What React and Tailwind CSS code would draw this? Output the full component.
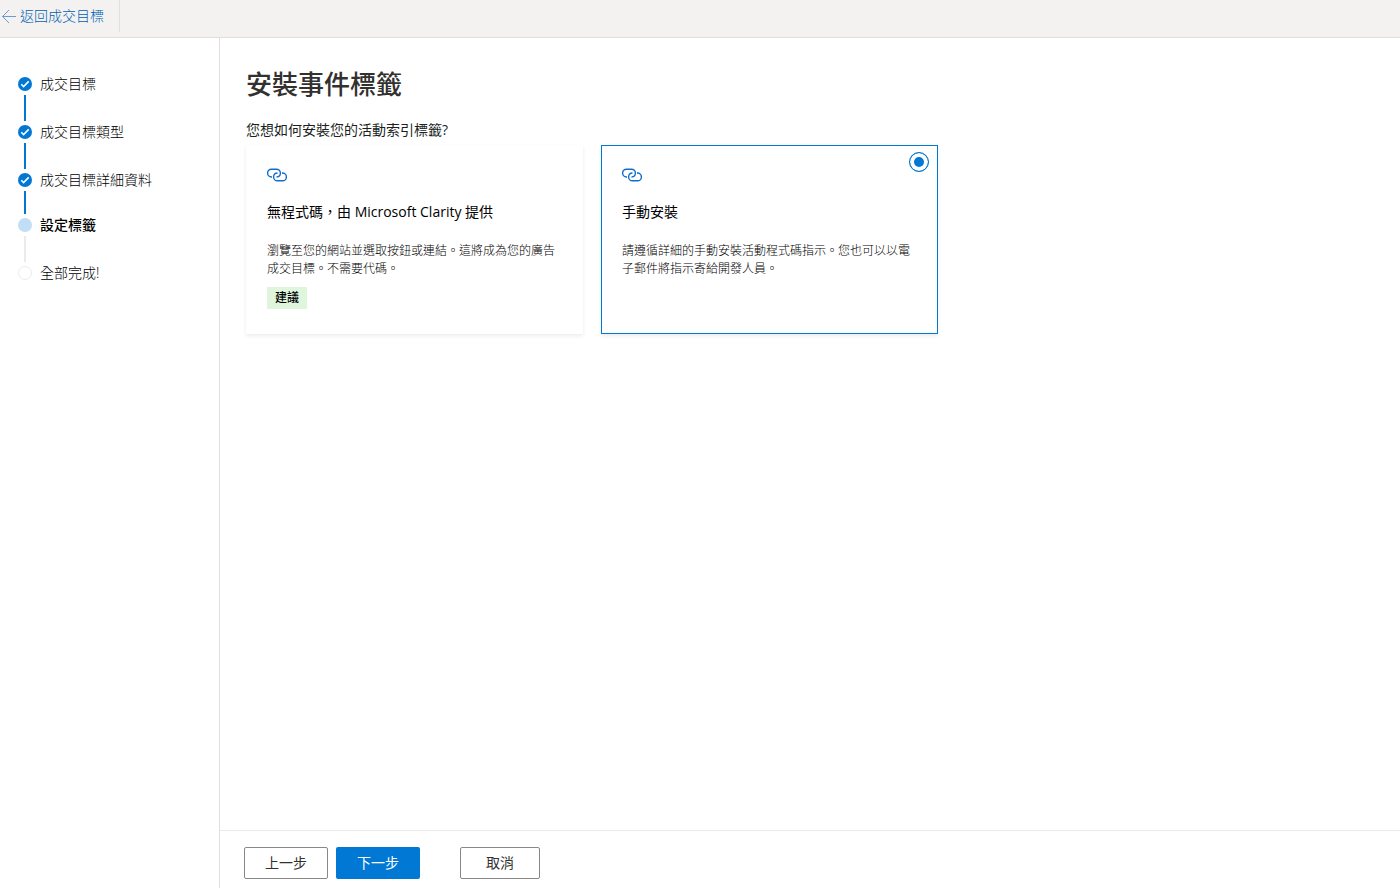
import React, { useState } from 'react';
import clsx from 'clsx';

// ─── Data ────────────────────────────────────────────────────────────────────
const STEPS = [
  { label: '成交目標', status: 'done' },
  { label: '成交目標類型', status: 'done' },
  { label: '成交目標詳細資料', status: 'done' },
  { label: '設定標籤', status: 'current' },
  { label: '全部完成!', status: 'todo' },
];

const OPTIONS = [
  {
    id: 'clarity',
    title: '無程式碼，由 Microsoft Clarity 提供',
    desc: '瀏覽至您的網站並選取按鈕或連結。這將成為您的廣告成交目標。不需要代碼。',
    badge: '建議',
  },
  {
    id: 'manual',
    title: '手動安裝',
    desc: '請遵循詳細的手動安裝活動程式碼指示。您也可以以電子郵件將指示寄給開發人員。',
  },
];

// ─── Icons ───────────────────────────────────────────────────────────────────
function BackArrow() {
  return (
    <svg className="h-3.5 w-4" viewBox="0 0 16 14" fill="none" stroke="#6b9bd2" aria-hidden="true">
      <path d="M16 7.5H2.5M9 1L2.5 7.5L9 14" />
    </svg>
  );
}

function LinkIcon() {
  return (
    <svg className="h-3.5 w-5" viewBox="0 0 20 14" fill="none" stroke="currentColor" strokeWidth="1.4" aria-hidden="true">
      <path d="M5 9H4.5a3.9 3.9 0 0 1 0-7.8h5a3.9 3.9 0 0 1 3.9 3.9c0 2.3-1.5 3.9-3.9 3.9" />
      <path d="M15 5h.5a3.9 3.9 0 0 1 0 7.8h-5a3.9 3.9 0 0 1-3.9-3.9c0-2.3 1.5-3.9 3.9-3.9" />
    </svg>
  );
}

function StepMark({ status }) {
  if (status === 'done') {
    return (
      <svg className="size-3.5" viewBox="0 0 14 14" fill="none" aria-hidden="true">
        <circle cx="7" cy="7" r="7" fill="#0078d4" />
        <path d="M3.3 7.2l2.3 2.3 5.1-5.1" stroke="#fff" strokeWidth="1.6" />
      </svg>
    );
  }
  return (
    <span
      className={clsx(
        'size-3.5 rounded-full',
        status === 'current' ? 'bg-[#c0def5]' : 'border border-[#edebe9]'
      )}
    />
  );
}

// ─── Sidebar ─────────────────────────────────────────────────────────────────
function Step({ step, next }) {
  return (
    <li aria-current={step.status === 'current' ? 'step' : undefined}>
      <div className="flex h-3.5 items-center gap-2">
        <StepMark status={step.status} />
        <span className={clsx('text-sm text-black', step.status === 'current' ? 'font-medium' : 'font-light')}>
          {step.label}
        </span>
      </div>
      {next && (
        <div className={clsx('py-1 pl-1.5', next.status === 'current' ? 'h-[31px]' : 'h-[34px]')}>
          <div className={clsx('h-full w-0.5', step.status === 'done' ? 'bg-[#0078d4]' : 'bg-[#edebe9]')} />
        </div>
      )}
    </li>
  );
}

function Sidebar() {
  return (
    <nav className="w-[220px] shrink-0 border-r border-[#e1dfdd] pt-[39px] pl-[18px]">
      <ol>
        {STEPS.map((step, i) => (
          <Step key={step.label} step={step} next={STEPS[i + 1]} />
        ))}
      </ol>
    </nav>
  );
}

// ─── Option card ─────────────────────────────────────────────────────────────
function OptionCard({ option, checked, onSelect }) {
  return (
    <label
      className={clsx(
        'relative block w-[337px] cursor-pointer border bg-white px-5 pt-[22px] pb-6 shadow-[0_2px_4px_rgba(0,0,0,0.08)]',
        checked ? 'border-[#0078d4]' : 'border-transparent'
      )}
    >
      <input
        type="radio"
        name="install"
        value={option.id}
        checked={checked}
        onChange={() => onSelect(option.id)}
        className="absolute top-1.5 right-2 size-5 appearance-none rounded-full border border-[#0078d4] opacity-0 shadow-[inset_0_0_0_4px_white] checked:bg-[#0078d4] checked:opacity-100"
      />
      <span className="block text-[#0f6cd0]"><LinkIcon /></span>
      <span className="mt-5 block text-sm text-black">{option.title}</span>
      <span className="mt-5 block text-xs leading-[18px] font-light text-black">{option.desc}</span>
      {option.badge && (
        <span className="mt-[9px] block w-fit bg-[#dff6dd] px-2 text-xs leading-[22px] font-medium text-black">{option.badge}</span>
      )}
    </label>
  );
}

// ─── Page ────────────────────────────────────────────────────────────────────
export default function App() {
  const [selected, setSelected] = useState('manual');

  return (
    <div className="flex min-h-screen flex-col bg-white font-['Open_Sans','Noto_Sans_CJK_TC',sans-serif] text-[#323130]" lang="zh-Hant">
      <header className="flex h-[38px] items-start border-b border-[#e1dfdd] bg-[#f3f2f1]">
        <a href="#goals" className="flex h-8 items-center gap-1 border-r border-[#e1dfdd] pr-[15px] text-sm font-light text-[#005fb0]">
          <BackArrow />
          返回成交目標
        </a>
      </header>

      <div className="flex grow">
        <Sidebar />
        <div className="flex grow flex-col">
          <main className="grow pt-7 pl-[26px]">
            <h1 className="text-[26px] leading-9 font-medium">安裝事件標籤</h1>
            <fieldset className="mt-[18px]">
              <legend className="text-sm text-[#201f1e]">您想如何安裝您的活動索引標籤?</legend>
              <div className="mt-[5px] flex flex-wrap gap-[18px]">
                {OPTIONS.map(o => (
                  <OptionCard key={o.id} option={o} checked={selected === o.id} onSelect={setSelected} />
                ))}
              </div>
            </fieldset>
          </main>

          <footer className="flex gap-2 border-t border-[#edebe9] pt-4 pb-[9px] pl-6 text-sm">
            <button type="button" className="h-8 w-[84px] rounded-xs border border-[#8a8886]">上一步</button>
            <button type="button" className="h-8 w-[84px] rounded-xs bg-[#0078d4] text-white">下一步</button>
            <button type="button" className="ml-8 h-8 w-20 rounded-xs border border-[#8a8886]">取消</button>
          </footer>
        </div>
      </div>
    </div>
  );
}
